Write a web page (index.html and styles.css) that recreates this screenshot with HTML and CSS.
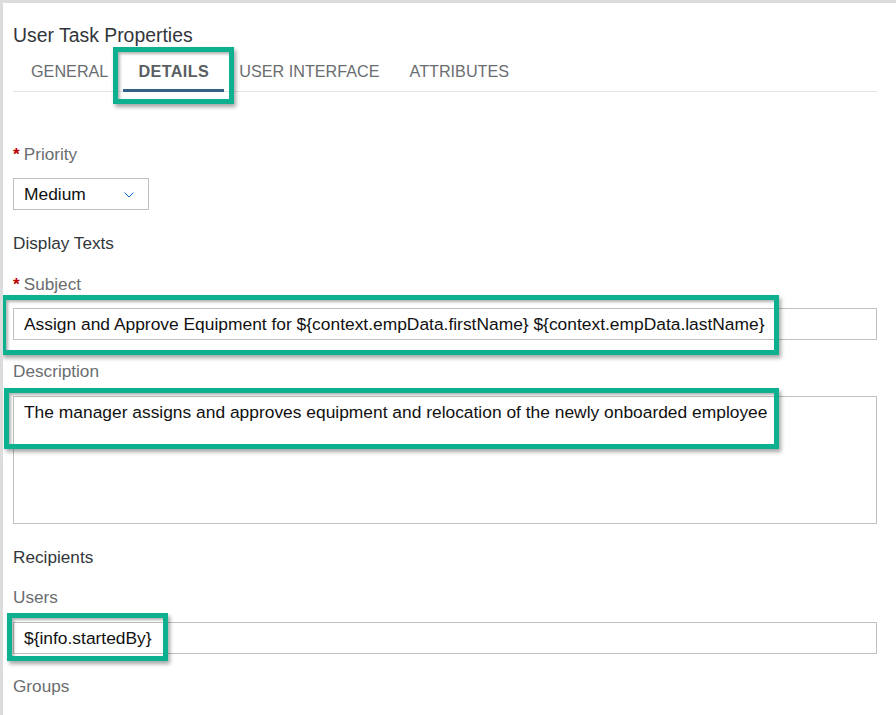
FILE: index.html
```html
<!DOCTYPE html>
<html lang="en">
<head>
<meta charset="utf-8">
<title>User Task Properties</title>
<link rel="stylesheet" href="styles.css">
</head>
<body>
<div class="page">
  <h1 class="title">User Task Properties</h1>
  <div class="tabs">
    <div class="tab">GENERAL</div>
    <div class="tab tab-active">DETAILS</div>
    <div class="tab">USER INTERFACE</div>
    <div class="tab">ATTRIBUTES</div>
  </div>

  <div class="form">
    <div class="label label-first"><span class="req">*</span>Priority</div>
    <div class="select">
      <span class="select-value">Medium</span>
      <svg class="chev" width="10" height="6" viewBox="0 0 10 6"><polyline points="0.5,0.5 5,5 9.5,0.5" fill="none" stroke="#0a6ed1" stroke-width="1"/></svg>
    </div>

    <div class="heading heading-display">Display Texts</div>

    <div class="label label-subject"><span class="req">*</span>Subject</div>
    <div class="input">Assign and Approve Equipment for ${context.empData.firstName} ${context.empData.lastName}</div>

    <div class="label label-desc">Description</div>
    <div class="textarea">The manager assigns and approves equipment and relocation of the newly onboarded employee</div>

    <div class="heading heading-recip">Recipients</div>

    <div class="label label-users">Users</div>
    <div class="input">${info.startedBy}</div>

    <div class="label label-groups">Groups</div>
  </div>

  <div class="mark mark-details"></div>
  <div class="mark mark-subject"></div>
  <div class="mark mark-desc"></div>
  <div class="mark mark-users"></div>
</div>
</body>
</html>
```

FILE: styles.css
```css
* { box-sizing: border-box; }

html, body {
  margin: 0;
  padding: 0;
  background: #ffffff;
}

body {
  font-family: "Liberation Sans", Arial, sans-serif;
  color: #32363a;
}

.page {
  position: relative;
  width: 896px;
  height: 715px;
  overflow: hidden;
  border-top: 3px solid #dcdcdc;
  border-left: 3px solid #dcdcdc;
  padding: 0 19px 0 10px;
}

.title {
  margin: 20px 0 2px;
  font-size: 19.4px;
  font-weight: normal;
  line-height: 24px;
  color: #32363a;
}

.tabs {
  display: flex;
  border-bottom: 1px solid #e5e5e5;
  padding-left: 3px;
}

.tab {
  padding: 5px 15px 0;
  line-height: 35px;
  font-size: 16.2px;
  color: #6a6d70;
  border-bottom: 3px solid transparent;
  margin-bottom: -1px;
}

.tab-active {
  font-weight: bold;
  color: #5b5f63;
  border-bottom-color: #346187;
  letter-spacing: 0.4px;
}

.form {
  display: flex;
  flex-direction: column;
}

.label, .heading {
  font-size: 17.2px;
  line-height: 32px;
  height: 32px;
}

.label { color: #6a6d70; margin-bottom: 8px; }
.heading { color: #32363a; }

.req {
  color: #bb0000;
  font-weight: bold;
  margin-right: 4px;
}

.label-first { margin-top: 46px; }
.heading-display { margin-top: 17px; }
.label-subject { margin-top: 9px; }
.label-desc { margin-top: 15px; margin-bottom: 9px; }
.heading-recip { margin-top: 17px; }
.label-users { margin-top: 8px; margin-bottom: 9px; }
.label-groups { margin-top: 16px; }

.select {
  width: 136px;
  height: 32px;
  border: 1px solid #bfbfbf;
  display: flex;
  align-items: center;
  justify-content: space-between;
  padding: 0 14px 0 10px;
  font-size: 17.4px;
  color: #111111;
}

.chev { display: block; margin-top: 1px; }

.input {
  height: 32px;
  border: 1px solid #bfbfbf;
  padding: 0 10px;
  font-size: 17.4px;
  line-height: 30px;
  color: #111111;
  white-space: nowrap;
  overflow: hidden;
}

.textarea {
  height: 128px;
  border: 1px solid #bfbfbf;
  padding: 4px 10px;
  font-size: 17.4px;
  line-height: 22px;
  color: #111111;
}

.mark {
  position: absolute;
  border: 5px solid #0db08f;
  box-shadow: 2px 3px 4px rgba(0, 0, 0, 0.35), inset 2px 2px 3px rgba(0, 0, 0, 0.3);
}

.mark-details { left: 110px; top: 44px; width: 121px; height: 57px; }
.mark-subject { left: -2px; top: 292px; width: 778px; height: 60px; }
.mark-desc { left: 1px; top: 385px; width: 775px; height: 61px; }
.mark-users { left: 4px; top: 610px; width: 161px; height: 48px; }
```
